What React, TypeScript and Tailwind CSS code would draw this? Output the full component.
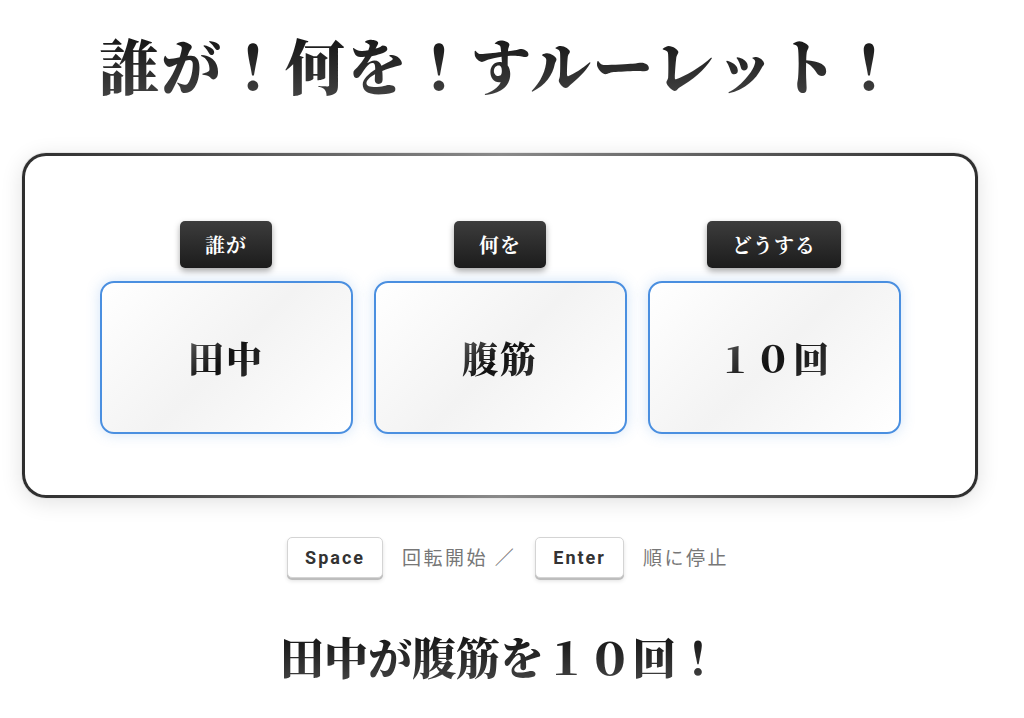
import React from 'react'

const serif = "font-['Noto_Serif_CJK_JP','Noto_Sans_CJK_JP',serif]"

const slots = [
    {label: '誰が', value: '田中'},
    {label: '何を', value: '腹筋'},
    {label: 'どうする', value: '１０回'},
]

const Key = ({children}: { children: React.ReactNode }) => (
    <span
        className="inline-flex items-center justify-center h-[41px] px-[17px] rounded-[5px] bg-white border border-[#d4d4d4] shadow-[0_2px_0_#bdbdbd,0_3px_4px_rgba(0,0,0,0.12)] font-['Roboto','Liberation_Sans',sans-serif] font-bold text-[18px] tracking-[2px] text-[#333]">
        {children}
    </span>
)

const App = () => {
    return (
        <div className="min-h-screen bg-white">
            <div className="w-[1000px] flex flex-col items-center">
                <h1 className={`mt-[28px] text-[60px] leading-[72px] font-black tracking-[2px] bg-linear-to-b from-[#111] to-[#444] bg-clip-text text-transparent ${serif}`}>
                    誰が！何を！すルーレット！
                </h1>

                <div
                    className="mt-[53px] w-[956px] rounded-[24px] p-[3px] bg-linear-to-r from-[#2e2e2e] via-[#8a8a8a] to-[#2e2e2e] shadow-[0_0_0_1px_#e6e6e6,0_4px_22px_rgba(0,0,0,0.12)]">
                    <div className="bg-white rounded-[21px] pt-[65px] pb-[61px] flex justify-center gap-[21px]">
                        {slots.map(slot => (
                            <div key={slot.label} className="flex flex-col items-center gap-[13px]">
                                <div
                                    className={`h-[47px] px-[25px] flex items-center justify-center rounded-[5px] bg-linear-to-b from-[#3d3d3d] to-[#1c1c1c] shadow-[0_3px_6px_rgba(0,0,0,0.35)] text-white font-bold text-[20px] tracking-[1px] ${serif}`}>
                                    {slot.label}
                                </div>
                                <div
                                    className="w-[253px] h-[153px] rounded-[14px] border-2 border-[#4a8fe0] bg-linear-135 from-[#ffffff] via-[#f3f3f3] to-[#ffffff] shadow-[0_0_14px_rgba(74,143,224,0.25)] flex items-center justify-center">
                                    <span
                                        className={`text-[36px] font-black tracking-[2px] bg-linear-135 from-[#666] via-[#111] to-[#3a3a3a] bg-clip-text text-transparent ${serif}`}>
                                        {slot.value}
                                    </span>
                                </div>
                            </div>
                        ))}
                    </div>
                </div>

                <div
                    className="mt-[39px] ml-[16px] flex items-center gap-[19px] font-['Noto_Sans_CJK_JP',sans-serif] text-[19px] tracking-[2.5px] text-[#777]">
                    <Key>Space</Key>
                    <span>回転開始 ／</span>
                    <Key>Enter</Key>
                    <span>順に停止</span>
                </div>

                <div
                    className={`mt-[52px] text-[44px] leading-[53px] font-black bg-linear-to-b from-[#111] to-[#444] bg-clip-text text-transparent ${serif}`}>
                    田中が腹筋を１０回！
                </div>
            </div>
        </div>
    )
}

export default App
